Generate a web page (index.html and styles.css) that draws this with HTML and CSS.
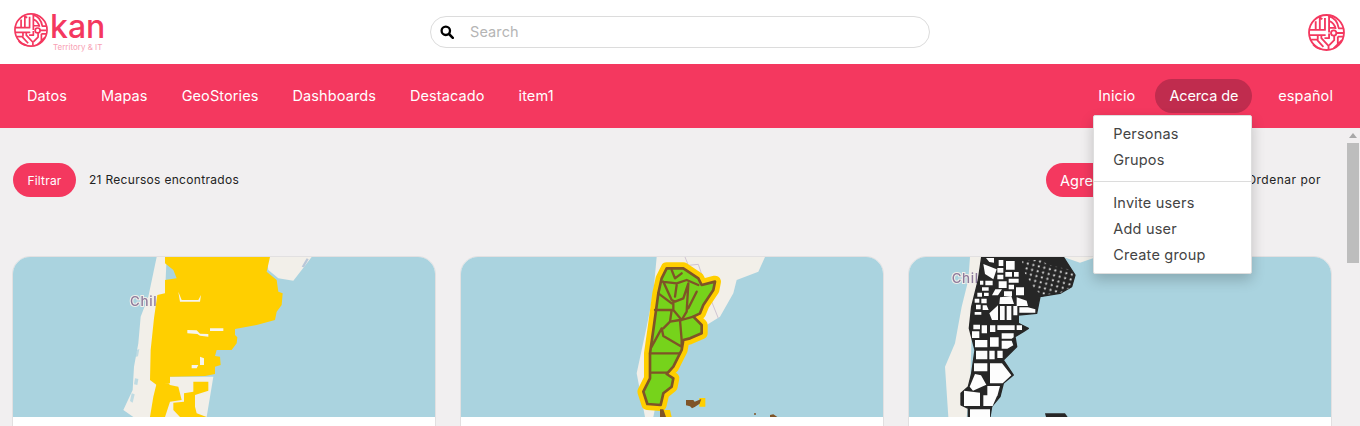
FILE: index.html
```html
<!DOCTYPE html>
<html lang="es">
<head>
<meta charset="utf-8">
<title>Kan</title>
<link rel="stylesheet" href="styles.css">
</head>
<body>
<svg class="defs" width="0" height="0" aria-hidden="true">
  <defs>
    <g id="maze" fill="none" stroke="#f4385f" stroke-width="1.800" stroke-linecap="butt" stroke-linejoin="round">
      <circle cx="18" cy="18" r="17"/>
      <path d="M2 15.500H16.500V4M7.500 15.500V7M11.500 15.500V3.500L14 5"/>
      <path d="M20 2c6 1.500 9 6 10 12h4M21 7c3 1 5 4 6 7.500"/>
      <path d="M20.500 1.500V13.500H27M20.500 13.500V18"/>
      <path d="M1.500 20.500H16.500L13 20.500V23.500L20 31V34.500M3 25H9.500M9.500 20.500V25M5 29.500C7 32 10 33.500 13 34M9 25.500L15 32"/>
      <path d="M25.500 21V25.500L20.500 30.500M27.500 18.500H34.500M29 22H34M29 22V29M33 25.500L25 33.500M16 23.500H20.500V19"/>
      <circle cx="25" cy="18.500" r="2.600" fill="#fff"/>
    </g>
  </defs>
</svg>
<header class="topbar">
  <a class="brand" href="#">
    <svg class="maze-logo" viewBox="0 0 36 36"><use href="#maze"/></svg>
    <span class="wordmark"><span class="wordmark-name">kan</span><span class="wordmark-sub">Territory &amp; IT</span></span>
  </a>
  <div class="search">
    <svg class="search-icon" viewBox="0 0 14 14"><circle cx="5.800" cy="5.800" r="4.200" fill="none" stroke="#000" stroke-width="2.300"/><path d="M9 9l3.800 3.800" stroke="#000" stroke-width="2.500" stroke-linecap="round"/></svg>
    <span class="search-placeholder">Search</span>
  </div>
  <svg class="maze-avatar" viewBox="0 0 36 36"><use href="#maze"/></svg>
</header>

<nav class="navbar">
  <ul class="nav-list">
    <li class="nav-item">Datos</li>
    <li class="nav-item">Mapas</li>
    <li class="nav-item">GeoStories</li>
    <li class="nav-item">Dashboards</li>
    <li class="nav-item">Destacado</li>
    <li class="nav-item">item1</li>
  </ul>
  <ul class="nav-list nav-right">
    <li class="nav-item">Inicio</li>
    <li class="nav-item nav-open">Acerca de
      <div class="dropdown">
        <div class="drop-group">
          <a class="drop-link">Personas</a>
          <a class="drop-link">Grupos</a>
        </div>
        <div class="drop-group drop-second">
          <a class="drop-link">Invite users</a>
          <a class="drop-link">Add user</a>
          <a class="drop-link">Create group</a>
        </div>
      </div>
    </li>
    <li class="nav-item nav-lang">español</li>
  </ul>
</nav>

<main class="content">
  <div class="toolbar">
    <div class="toolbar-side">
      <button class="pill">Filtrar</button>
      <span class="count">21 Recursos encontrados</span>
    </div>
    <div class="toolbar-side">
      <button class="pill pill-add">Agregar recurso</button>
      <span class="sort">Ordenar por</span>
    </div>
  </div>
  <div class="cards">
    <article class="card">
      <svg class="map" viewBox="39 21 1266 480" preserveAspectRatio="none">
        <rect x="39" y="21" width="1266" height="480" fill="#aad3df"/>
        <path class="land" d="M470 21H500L495 130L470 200L460 300L450 400L450 501H400L370 480L398 420L402 350L415 280L422 200L445 140Z"/>
        <path class="land" d="M450 380H640L620 501H450ZM800 21H935L905 60L880 92L835 85L805 60Z"/>
        <path fill="#aad3df" opacity=".7" d="M410 300l8-3-4 22-8 2zM405 385l10 2-3 18-10-2zM395 430l9 3-6 25-8-5z"/>
        <path fill="#b9c7d8" d="M905 50l15-25 6 3-14 24z"/>
        <text class="chil" x="390" y="168">Chil</text>
        <path fill="#ffcf00" d="M495 21H810L800 65L830 90L835 125L848 130L845 165L830 185L825 210L770 225L705 237L705 255L712 262L710 280L695 300L650 300L645 318L660 320L662 345L645 350L645 372L615 378L510 380L510 400L470 405L450 390L452 300L462 205L472 135L495 130L495 90L530 85L520 60L495 40Z"/>
        <path fill="#ffcf00" d="M470 400H505L510 405L535 410L545 450L510 455L495 501H450L460 440ZM580 395H625L625 422L585 435L585 470L590 490L620 501H540L520 480V458L552 455V430L580 425Z"/>
        <path fill="#f6f4ee" d="M562 240l28 1 10 10 25 1v8l-25-3-8-5-30-2zM600 320l12 5v20h-12zM575 345h20l-5 10h-15zM630 235h40v8h-40zM535 125l10 25h50l8-15-3 20h-60z"/>
      </svg>
      <div class="card-body"></div>
    </article>
    <article class="card">
      <svg class="map" viewBox="33 21 1266 480" preserveAspectRatio="none">
        <rect x="33" y="21" width="1266" height="480" fill="#aad3df"/>
        <path class="land" d="M620 21H945L925 65L860 90L850 130L810 200L770 225L650 300L610 501H585L560 370L590 230L610 130Z"/>
        <path d="M705 21l10 25 30-3 15 45M775 130l20 50 10 25" fill="none" stroke="#cfc4d2" stroke-width="3"/>
        <g stroke-linejoin="round" stroke-linecap="round">
          <path fill="#ffcf00" stroke="#ffcf00" stroke-width="36" d="M650 55H700L745 85L755 105L795 95L790 120L760 165L750 190L730 200L755 225L755 250L720 265L700 270L695 300L685 320L670 350L650 372L670 385L665 410L640 430L632 465L592 462L580 425L600 385L600 310L610 240L625 130L635 85Z"/>
          <path fill="#76d31b" stroke="#7f5427" stroke-width="8" d="M650 55H700L745 85L755 105L795 95L790 120L760 165L750 190L730 200L755 225L755 250L720 265L700 270L695 300L685 320L670 350L650 372L670 385L665 410L640 430L632 465L592 462L580 425L600 385L600 310L610 240L625 130L635 85Z"/>
          <path fill="none" stroke="#7f5427" stroke-width="7" d="M635 95L680 100L710 90L745 105M665 60L675 85L695 70M640 95L665 150L675 155L700 145L715 100L710 185L695 210L730 200M680 105L675 140M740 125L715 175M625 130L665 160M615 180H665L660 215L690 210L695 270V290L640 258L635 235L605 290M670 155L670 180L695 210M640 235L660 215M600 310H690M605 368H650"/>
        </g>
        <path fill="#ffcf00" d="M748 444h18v26h-18zM630 480h30l5 21h-35z"/>
        <path fill="#7f5427" d="M708 450l22 0 4 5 20-8-5 14-15 10-8 4-6-6-12-3zM630 478h10l8 23h-18zM912 490l6 0 0 4-6 0zM960 495l10-2 12 8h-22z"/>
      </svg>
      <div class="card-body"></div>
    </article>
    <article class="card">
      <svg class="map map-soft" viewBox="27 21 1266 480" preserveAspectRatio="none">
        <defs>
          <pattern id="dots" width="17" height="15" patternUnits="userSpaceOnUse" patternTransform="rotate(14)">
            <rect width="17" height="15" fill="#262626"/>
            <circle cx="8" cy="7" r="3.400" fill="#dcdcdc"/>
          </pattern>
        </defs>
        <rect x="27" y="21" width="1266" height="480" fill="#aad3df"/>
        <path class="land" d="M210 21H590L540 38L490 21L240 120L215 250L210 420L200 501H145L135 350L165 280L185 170L205 90Z"/>
        <text class="chil" x="155" y="98">Chil</text>
        <path fill="#262626" stroke="#262626" stroke-width="4" stroke-linejoin="round" d="M245 21H490L525 75L515 110L480 130L420 140L410 190L355 195L355 220L385 235L370 245L345 260L350 290L310 330L340 375L310 400L300 440L275 470L270 501H205V475L183 465V430L205 410L215 370L225 300L208 235L215 170L235 90Z"/>
        <path fill="#fdfdfd" d="M250 42L290 58L280 88L255 72ZM258 24h24v14l-14-2zM296 30h14v18h-14zM318 33h26v26h-26zM292 54h18v14h-18zM316 66h20v14h-20zM342 66h14v14h-14zM292 74h18v14h-18zM296 94h24v20h-24zM326 86h30v12h-30zM326 104h16v14h-16zM348 112h24v24h-24zM240 92h10v12h-10zM256 92h22v14h-22zM246 112h20v10h-20zM286 118l20 0-12 18h-18zM232 128h14v12h-14zM252 128h14v10h-14zM224 146h14v12h-14zM244 146h16v14h-16zM312 124h24v14h-24zM300 142l34-4 8 24h-44zM350 142l30 10 4 16h-34zM228 164h14v14h-14zM248 166h12l6 14h-18zM224 186h20v8h-20zM268 190l26-24v44h-18zM300 168h14v42h-14zM320 168h14v42h-14zM340 168h12v28h-12zM358 172h26l22 6v10h-48zM220 224h20v14h-20zM245 226h16v24h-16zM270 226h16v20h-16zM292 226h52v14h-52zM350 226h16v14h-16zM216 244h22v20h-22zM225 270h37v22h-37zM270 262h26v28h-26zM305 250h36v12l-6 4h-30zM305 272h30l5 14-18 10h-17zM228 302h34v26h-34zM268 302h16v26h-16zM292 302h16v22h-16zM222 340h40v24h-40zM270 340h36l28 36-26 24h-38zM225 372l18 4 16 28-40 18-10-12zM262 408h38l-8 30h-30zM192 422l48 6v40h-48zM250 436h42l-14 32h-28zM210 478h60v23h-60z"/>
        <path fill="url(#dots)" d="M365 30H490L525 75L515 110L480 130L425 135L400 115L375 70Z"/>
        <path fill="#262626" d="M415 21H490L515 60L470 50L440 42Z"/>
        <path fill="#262626" d="M435 490h60l8 11h-65z"/>
      </svg>
      <div class="card-body"></div>
    </article>
  </div>
</main>

<div class="scrollbar"><span class="scroll-arrow"></span><span class="scroll-thumb"></span></div>
</body>
</html>
```

FILE: styles.css
```css
* { box-sizing: border-box; }
html, body { margin: 0; height: 426px; overflow: hidden; }
body { background: #f1eff0; font-family: "Inter", "Liberation Sans", sans-serif; color: #222; position: relative; }
.defs { position: absolute; }
ul { list-style: none; margin: 0; padding: 0; }

.topbar { height: 64px; background: #fff; display: flex; align-items: center; padding: 0 15px 0 14px; position: relative; }
.brand { display: flex; flex: none; align-items: flex-start; gap: 2px; text-decoration: none; width: 416px; }
.maze-logo { width: 34px; height: 34px; }
.wordmark { display: flex; flex-direction: column; color: #f4385f; margin-top: -2px; }
.wordmark-name { font-size: 32px; line-height: 31px; font-weight: 500; }
.wordmark-sub { font-size: 8px; line-height: 9px; color: #f8a0b4; margin: 1px 0 0 3px; white-space: nowrap; }
.search { flex: none; width: 500px; height: 32px; border: 1px solid #dcdcdc; border-radius: 16px; background: #fff; display: flex; align-items: center; padding: 0 0 1px 9px; gap: 17px; }
.search-icon { width: 14px; height: 14px; }
.search-placeholder { font-size: 14.5px; color: #b5b5b5; letter-spacing: .1px; margin-left: -1px; }
.maze-avatar { flex: none; width: 37px; height: 37px; margin-left: auto; }

.navbar { height: 64px; background: #f4385f; display: flex; align-items: center; justify-content: space-between; padding: 0 13px; color: #fff; }
.nav-list { display: flex; align-items: center; gap: 6px; }
.nav-item { font-size: 14.5px; line-height: 34px; height: 34px; padding: 0 14px; border-radius: 17px; position: relative; white-space: nowrap; letter-spacing: .1px; }
.nav-open { background: #c02c4e; letter-spacing: -.12px; }
.nav-lang { margin-left: 6px; }

.dropdown { position: absolute; top: 36px; right: 0; width: 159px; height: 159px; background: #fff; border: 1px solid #dedede; border-radius: 2px; box-shadow: 0 6px 14px rgba(0,0,0,.2); color: #444; z-index: 5; letter-spacing: .2px; }
.drop-group { display: flex; flex-direction: column; padding: 5px 0; }
.drop-second { border-top: 1px solid #dcdcdc; padding-top: 8px; margin-top: 3px; }
.drop-link { font-size: 14.5px; line-height: 26px; padding-left: 19px; }

.content { padding: 35px 0 0 12px; }
.toolbar { display: flex; justify-content: space-between; align-items: center; height: 34px; padding: 0 39px 0 1px; }
.toolbar-side { display: flex; align-items: center; gap: 13px; }
.pill { height: 34px; border: 0; border-radius: 17px; background: #f4385f; color: #fff; font: inherit; font-size: 12px; padding: 0 14px; width: 63px; letter-spacing: .2px; }
.pill-add { font-size: 14.5px; width: 201px; text-align: left; letter-spacing: .2px; }
.count, .sort { font-size: 12px; line-height: 14px; color: #222; letter-spacing: .3px; }
.sort { margin-left: -13px; letter-spacing: .5px; }

.cards { display: grid; grid-template-columns: repeat(3, 424px); gap: 24px; margin-top: 59px; }
.card { background: #fff; border: 1px solid #e2e0e1; border-radius: 18px; overflow: hidden; height: 300px; }
.map { display: block; width: 422px; height: 160px; filter: blur(.4px); }
.map-soft { filter: blur(.6px); }
.land { fill: #f2efe9; }
.chil { font-family: "Inter", sans-serif; font-size: 40px; font-weight: 500; fill: #8d7a9c; letter-spacing: 2px; stroke: #f2efe9; stroke-width: 6px; paint-order: stroke; }
.card-body { height: 140px; background: #fff; }

.scrollbar { position: absolute; top: 128px; right: 0; width: 15px; height: 298px; display: flex; flex-direction: column; align-items: center; }
.scroll-arrow { width: 0; height: 0; margin-top: 5px; border-left: 4px solid transparent; border-right: 4px solid transparent; border-bottom: 5px solid #a8a8a8; }
.scroll-thumb { width: 12px; height: 120px; margin-top: 5px; background: #bdbdbd; }
```
